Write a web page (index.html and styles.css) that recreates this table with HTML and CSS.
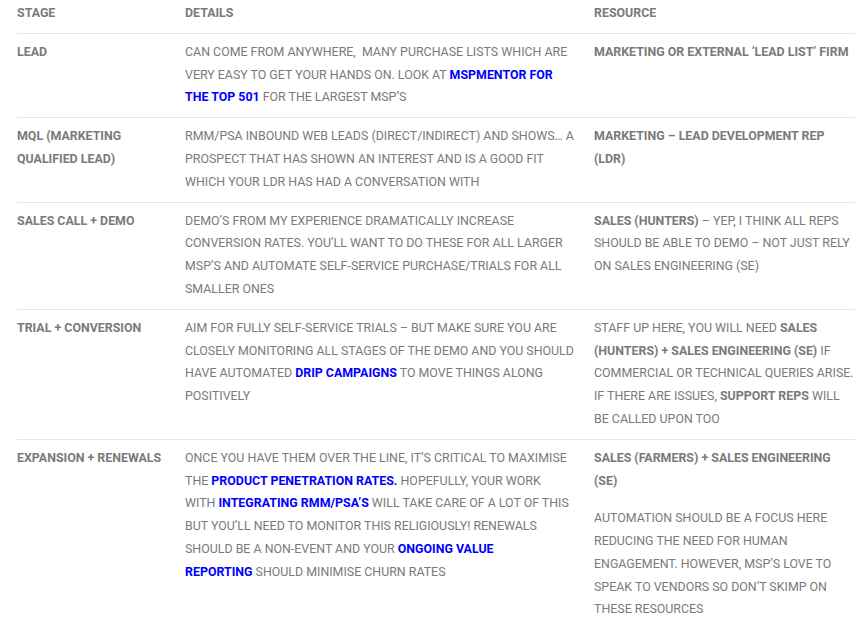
FILE: index.html
```html
<!DOCTYPE html>
<html>
<head>
<meta charset="utf-8">
<link rel="stylesheet" href="styles.css">
</head>
<body>
<table class="stages">
  <colgroup>
    <col class="c-stage">
    <col class="c-details">
    <col class="c-resource">
  </colgroup>
  <thead>
    <tr>
      <th>Stage</th>
      <th>Details</th>
      <th>Resource</th>
    </tr>
  </thead>
  <tbody>
    <tr>
      <td class="stage">Lead</td>
      <td>Can come from anywhere,&nbsp; many purchase lists which are very easy to get your hands on. Look at <a href="#">MSPMentor for the top 501</a> for the largest MSP’s</td>
      <td><strong>Marketing or external ‘lead list’ firm</strong></td>
    </tr>
    <tr>
      <td class="stage">MQL (Marketing Qualified Lead)</td>
      <td>RMM/PSA inbound web leads (direct/indirect) and shows… a prospect that has shown an interest and is a good fit which your LDR has had a conversation with</td>
      <td><strong>Marketing – Lead Development Rep (LDR)</strong></td>
    </tr>
    <tr>
      <td class="stage">Sales Call + Demo</td>
      <td>Demo’s from my experience dramatically increase conversion rates. You’ll want to do these for all larger MSP’s and automate self-service purchase/trials for all smaller ones</td>
      <td><strong>Sales (Hunters)</strong> – Yep, I think all reps should be able to demo – not just rely on sales engineering (SE)</td>
    </tr>
    <tr>
      <td class="stage">Trial + Conversion</td>
      <td>Aim for fully self-service trials – but make sure you are closely monitoring all stages of the demo and you should have automated <a href="#">drip campaigns</a> to move things along positively</td>
      <td>Staff up here, you will need <strong>Sales (Hunters) + Sales Engineering (SE)</strong> if commercial or technical queries arise. If there are issues, <strong>support reps</strong> will be called upon too</td>
    </tr>
    <tr class="last">
      <td class="stage">Expansion + Renewals</td>
      <td>Once you have them over the line, it’s critical to maximise the <a href="#">product penetration rates.</a> Hopefully, your work with <a href="#">integrating RMM/PSA’s</a> will take care of a lot of this but you’ll need to monitor this religiously! Renewals should be a non-event and your <a href="#">ongoing value reporting</a>&nbsp;should minimise churn rates</td>
      <td>
        <p class="para"><strong>Sales (Farmers) + Sales Engineering (SE)</strong></p>
        <p class="para">Automation should be a focus here reducing the need for human engagement. However, MSP’s love to speak to vendors so don’t skimp on these resources</p>
      </td>
    </tr>
  </tbody>
</table>
</body>
</html>
```
FILE: styles.css
```css
html, body {
  margin: 0;
  padding: 0;
  background: #ffffff;
}

body {
  font-family: Roboto, "Liberation Sans", sans-serif;
  font-size: 12.4px;
  line-height: 22.75px;
  color: #7a7a7a;
  text-transform: uppercase;
}

.stages {
  border-collapse: collapse;
  table-layout: fixed;
  margin-left: 17px;
  width: 838px;
}

.c-stage { width: 168px; }
.c-details { width: 409px; }
.c-resource { width: 261px; }

.stages th,
.stages td {
  text-align: left;
  vertical-align: top;
  padding: 7px 20px 8.2px 0;
  border-bottom: 1px solid #e6e6e6;
}

.stages th {
  font-weight: 700;
  padding-top: 2px;
  padding-bottom: 8px;
}

.stages td:last-child,
.stages th:last-child {
  padding-right: 0;
}

.stages td.stage {
  font-weight: 700;
}

.stages tr.last td {
  border-bottom: none;
}

strong {
  font-weight: 700;
}

a {
  color: #0000ff;
  font-weight: 700;
  text-decoration: none;
}

.para {
  margin: 0 0 15px;
}
```
